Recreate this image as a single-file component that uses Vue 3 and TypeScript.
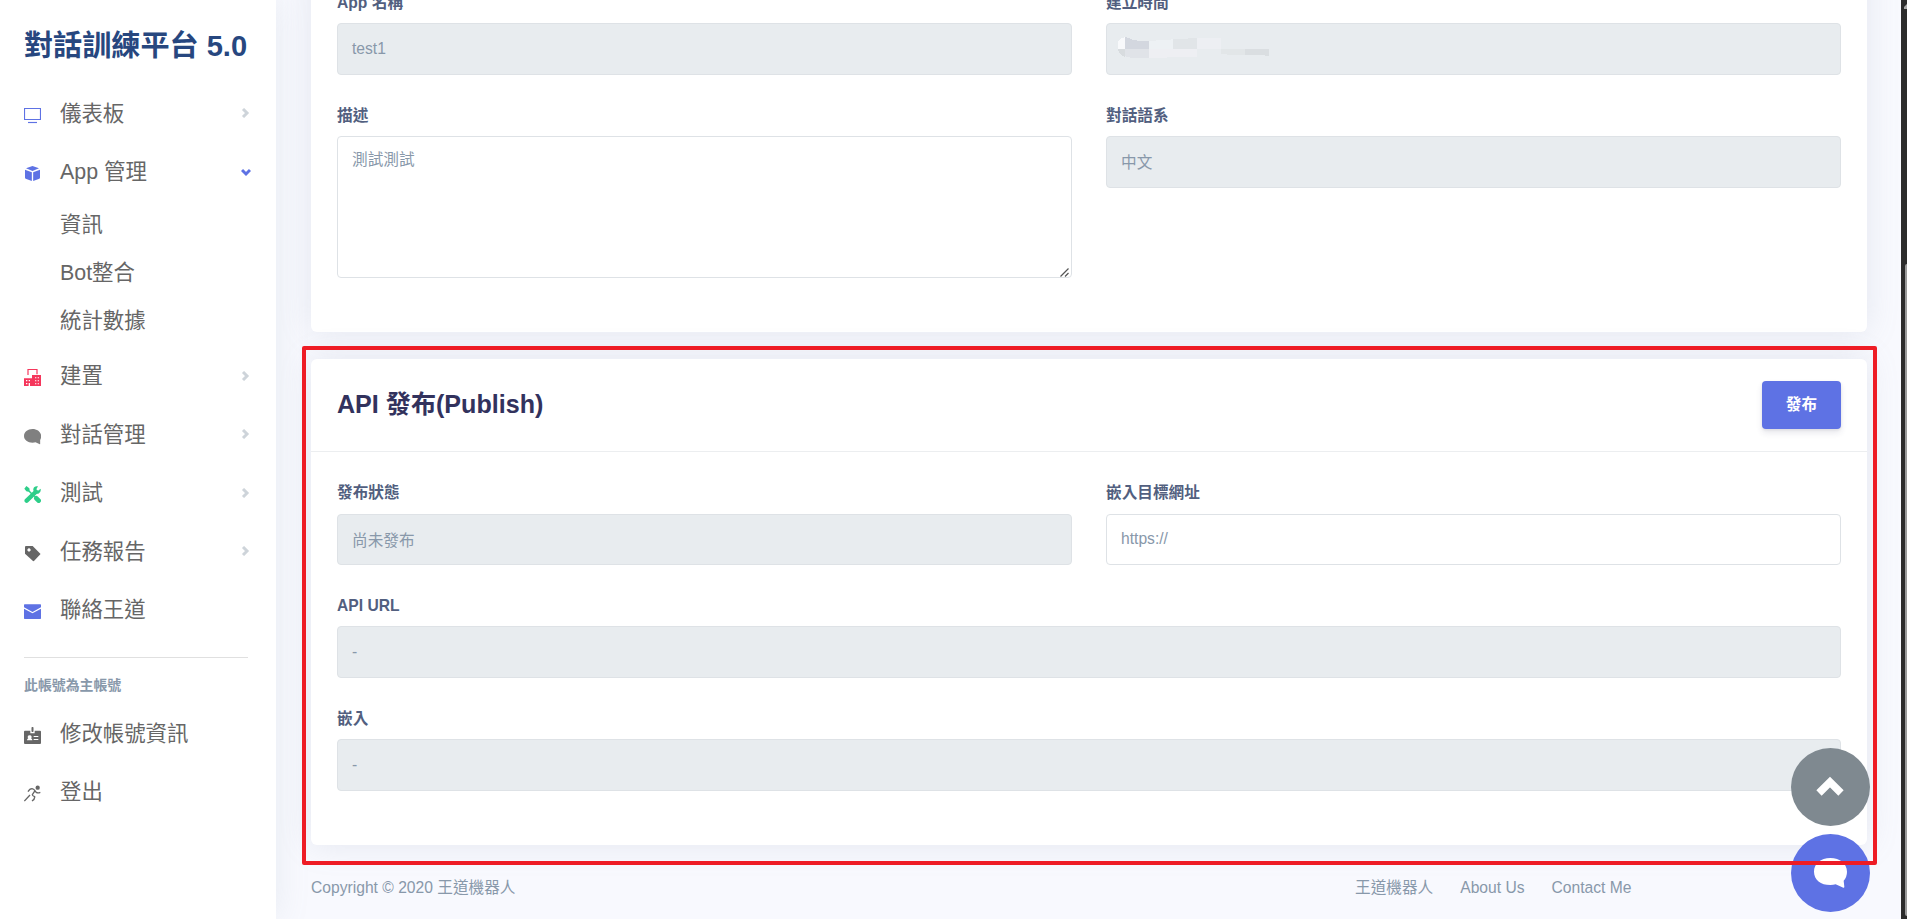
<script setup lang="ts">
import { h, type FunctionalComponent } from 'vue'

interface NavItem {
  label: string
  icon: string
  color: string
  state?: 'closed' | 'open'
  children?: string[]
}

const mainNav: NavItem[] = [
  { label: '儀表板', icon: 'tv', color: '#5e72e4', state: 'closed' },
  { label: 'App 管理', icon: 'box', color: '#5e72e4', state: 'open', children: ['資訊', 'Bot整合', '統計數據'] },
  { label: '建置', icon: 'building', color: '#f5365c', state: 'closed' },
  { label: '對話管理', icon: 'chat', color: '#808080', state: 'closed' },
  { label: '測試', icon: 'tools', color: '#2dce89', state: 'closed' },
  { label: '任務報告', icon: 'tag', color: '#666666', state: 'closed' },
  { label: '聯絡王道', icon: 'mail', color: '#5e72e4' },
]

const accountNav: NavItem[] = [
  { label: '修改帳號資訊', icon: 'badge', color: '#666666' },
  { label: '登出', icon: 'run', color: '#666666' },
]

const shapes: Record<string, string> = {
  tv: '<path d="M1.5 4.5h48v33h-48z" fill="none" stroke="currentColor" stroke-width="3.500"/><path d="M12 46.500h27" stroke="currentColor" stroke-width="3.500"/>',
  box: '<path fill="currentColor" d="M25.500 3 45 10 25.500 18 6 10zM3 14l20.500 8v26L5 41q-2-1-2-3zM48 14l-20.500 8v26L46 41q2-1 2-3z"/>',
  building: '<path d="M12 18V1.500h27V16" fill="none" stroke="currentColor" stroke-width="3.500"/><path fill="currentColor" fill-rule="evenodd" d="M0 28h24V18h27v33H0zm6 5v4h4v-4zm8 0v4h4v-4zm-8 9v4h4v-4zm8 0v9h4v-9zM33 25v3h4v-3zm8 0v3h4v-3zm-8 9v3h4v-3zm8 0v3h4v-3zm-8 9v3h4v-3zm8 0v3h4v-3z"/>',
  chat: '<path fill="currentColor" d="M25.500 3C11 3 0 12 0 24s11 20 25.500 20q5 0 9-1l13 6q1 0 1-1V36q3-5 3-12C51 12 40 3 25.500 3z"/>',
  tools: '<path d="M8 44 35 18" stroke="currentColor" stroke-width="13" stroke-linecap="round"/><path d="M50 8l-8 6-5-4 5-9Q30-1 28 9q-1 6 4 11t11 3q9-3 7-15z" fill="currentColor"/><path d="M8 8l16 16" stroke="currentColor" stroke-width="4.500"/><path d="M7 0l9 7 1 6-4 4-6-1-6-8z" fill="currentColor"/><path d="M33 34l10 10" stroke="#fff" stroke-width="18" stroke-linecap="butt"/><path d="M37 37l7 7" stroke="currentColor" stroke-width="14" stroke-linecap="round"/><path d="M31 30l6 6" stroke="currentColor" stroke-width="4"/>',
  tag: '<path fill="currentColor" fill-rule="evenodd" d="M3 6q0-3 3-3h20l23 23q1 1 0 2L30 48q-2 1-3 0L3 26zM15 10a5 5 0 1 0 .1 0z"/>',
  mail: '<path fill="currentColor" d="M2 4h47q2 0 2 2v7L25.500 27 0 13V6q0-2 2-2zM0 17l25.500 14L51 17v29q0 2-2 2H2q-2 0-2-2z"/>',
  badge: '<path fill="currentColor" fill-rule="evenodd" d="M3 11h16v8h13v-8h16q3 0 3 3v34q0 3-3 3H3q-3 0-3-3V14q0-3 3-3zM9 40h16q0-5-4-6 2-2 2-5-1-4-6-4t-6 4q0 3 2 5-4 1-4 6zM29 27v3h14v-3zm0 9v3h14v-3z"/><rect x="22.500" y="0" width="6" height="15" rx="2" fill="currentColor"/>',
  run: '<circle cx="41" cy="8" r="6.500" fill="currentColor"/><path d="M12 20q5-9 12-9 5 1 9 6l-8 12q0 3 7 6 1 7-8 13M33 17q4 10 16 5M18 30 1 48" fill="none" stroke="currentColor" stroke-width="4"/>',
}

const NavIcon: FunctionalComponent<{ name: string }> = (props) =>
  h('svg', { viewBox: '0 0 51 51', width: 17, height: 17, innerHTML: shapes[props.name] })
NavIcon.props = ['name']

const footerLinks: string[] = ['王道機器人', 'About Us', 'Contact Me']
</script>

<template>
  <div class="page">
    <aside class="sidebar">
      <h1 class="brand">對話訓練平台 5.0</h1>
      <nav class="nav">
        <template v-for="item in mainNav" :key="item.label">
          <a class="nav-item">
            <NavIcon class="nav-icon" :name="item.icon" :style="{ color: item.color }" />
            <span class="nav-label">{{ item.label }}</span>
            <svg v-if="item.state" class="chevron" :class="item.state" viewBox="0 0 10 10" width="10" height="10">
              <path d="M3 1l4 4-4 4" fill="none" stroke="currentColor" stroke-width="3" />
            </svg>
          </a>
          <div v-if="item.children" class="sub-nav">
            <a v-for="child in item.children" :key="child" class="sub-item">{{ child }}</a>
          </div>
        </template>
      </nav>
      <hr class="divider" />
      <h6 class="nav-heading">此帳號為主帳號</h6>
      <nav class="account-nav">
        <a v-for="item in accountNav" :key="item.label" class="nav-item">
          <NavIcon class="nav-icon" :name="item.icon" :style="{ color: item.color }" />
          <span class="nav-label">{{ item.label }}</span>
        </a>
      </nav>
    </aside>

    <main class="content">
      <section class="card info-card">
        <div class="row">
          <div class="group">
            <label class="label">App 名稱</label>
            <div class="control disabled">test1</div>
          </div>
          <div class="group">
            <label class="label">建立時間</label>
            <div class="control disabled redacted">
              <svg width="152" height="21" viewBox="0 0 456 63" shape-rendering="crispEdges">
                <path d="M2 36V20Q6 2 24 1v35z" fill="#f8f9fb" />
                <path d="M24 1q14-1 25 9l47 2v24H24z" fill="#d3d7df" />
                <path d="M2 36h22v24Q6 54 2 36z" fill="#d8dcdf" />
                <path d="M24 36h72v27H60q-22 0-36-5z" fill="#e0e3e8" />
                <path d="M96 12l72-5v29H96z" fill="#edf1f4" />
                <path d="M96 36h144v23l-144 4z" fill="#eeeff3" />
                <path d="M168 7l72-4v33h-72z" fill="#e1e5e8" />
                <path d="M240 2h72v34h-72z" fill="#edeff3" />
                <path d="M312 36h72v18l-72-2z" fill="#e2e6e8" />
                <path d="M384 36h72v20l-72-3z" fill="#dadee1" />
              </svg>
            </div>
          </div>
        </div>
        <div class="row">
          <div class="group">
            <label class="label">描述</label>
            <div class="control textarea">
              測試測試
              <svg class="grip" width="9" height="9" viewBox="0 0 9 9">
                <path d="M0.500 8.500 8.500 0.500M5 8.500l3.500-3.500" stroke="#555" stroke-width="1.200" />
              </svg>
            </div>
          </div>
          <div class="group">
            <label class="label">對話語系</label>
            <div class="control disabled cjk">中文</div>
          </div>
        </div>
      </section>

      <section class="card">
        <header class="card-header">
          <h3 class="card-title">API 發布(Publish)</h3>
          <button class="publish" type="button">發布</button>
        </header>
        <div class="card-body">
          <div class="row">
            <div class="group">
              <label class="label">發布狀態</label>
              <div class="control disabled short cjk">尚未發布</div>
            </div>
            <div class="group">
              <label class="label">嵌入目標網址</label>
              <div class="control short latin">https://</div>
            </div>
          </div>
          <div class="row">
            <div class="group">
              <label class="label">API URL</label>
              <div class="control disabled">-</div>
            </div>
          </div>
          <div class="row">
            <div class="group">
              <label class="label">嵌入</label>
              <div class="control disabled">-</div>
            </div>
          </div>
        </div>
      </section>

      <footer class="footer">
        <span class="copyright">Copyright © 2020 王道機器人</span>
        <nav class="footer-nav">
          <a v-for="link in footerLinks" :key="link">{{ link }}</a>
        </nav>
      </footer>
    </main>

    <div class="floating">
      <button class="round top" type="button">
        <svg width="28" height="20" viewBox="0 0 28 20">
          <path d="M3 17 14 6l11 11" fill="none" stroke="#fff" stroke-width="7.500" />
        </svg>
      </button>
      <button class="round talk" type="button">
        <svg width="33" height="30" viewBox="0 0 99 90">
          <path d="M49 0C20 0 0 17 0 41s20 40 49 40q9 0 16-2l23 10q3 1 3-3l-2-18q10-11 10-27C99 17 78 0 49 0z" fill="#fff" />
        </svg>
      </button>
    </div>

    <div class="highlight"></div>

    <div class="scrollbar">
      <svg class="scroll-arrow" width="3" height="5" viewBox="0 0 3 5"><path d="M0 5V3l3-3v5z" fill="#aaa" /></svg>
      <div class="thumb"></div>
    </div>
  </div>
</template>

<style>
body {
  margin: 0;
  overflow: hidden;
}
</style>

<style scoped>
.page {
  position: relative;
  display: flex;
  width: 1907px;
  height: 919px;
  overflow: hidden;
  box-sizing: border-box;
  background: #f8f9fe;
  color: #8898aa;
  font-family: 'Liberation Sans', 'Noto Sans CJK TC', sans-serif;
  font-size: 15.65px;
}

.page * {
  box-sizing: border-box;
}

.sidebar {
  position: relative;
  z-index: 1;
  flex: none;
  width: 276px;
  height: 919px;
  padding: 0 27px 0 24px;
  background: #fff;
  box-shadow: 0 0 32px 0 rgba(136, 152, 170, 0.15);
}

.brand {
  height: 84px;
  margin: 0;
  padding-top: 1px;
  color: #27477f;
  font-size: 29.1px;
  font-weight: 700;
  line-height: 91px;
  white-space: nowrap;
}

.nav {
  padding-top: 0.4px;
}

.nav-item {
  display: flex;
  align-items: center;
  height: 58.6px;
  color: #666;
  font-size: 21.4px;
}

.nav-icon {
  flex: none;
  margin: 3px 19px 0 0;
}

.nav-label {
  flex: 1;
  line-height: 32px;
  white-space: nowrap;
}

.chevron {
  flex: none;
  margin: -1px -1px 0 0;
  color: #ced4da;
}

.chevron.open {
  margin-right: -2px;
  color: #5e72e4;
  transform: rotate(90deg);
}

.sub-item {
  display: block;
  height: 48.4px;
  padding-left: 36px;
  color: #666;
  font-size: 21.4px;
  line-height: 47px;
}

.divider {
  height: 1px;
  margin: 17px 1px 0 0;
  border: 0;
  background: #e0e0e0;
}

.nav-heading {
  height: 48px;
  margin: 0;
  color: #8898aa;
  font-size: 13.9px;
  font-weight: 700;
  line-height: 54px;
}

.account-nav .nav-item {
  height: 57.3px;
}

.content {
  flex: none;
  width: 1625px;
  padding: 0 34px 0 35px;
}

.card {
  border-radius: 6px;
  background: #fff;
  box-shadow: 0 0 32px 0 rgba(136, 152, 170, 0.18);
}

.info-card {
  height: 380px;
  margin-top: -48px;
  margin-bottom: 27px;
  padding: 38px 26px 0;
}

.row {
  display: flex;
  gap: 34px;
  margin-bottom: 28px;
}

.group {
  flex: 1;
}

.label {
  display: block;
  height: 24px;
  margin-bottom: 9px;
  color: #525f7f;
  font-weight: 600;
  line-height: 26px;
}

.card-body .row:first-child .label {
  line-height: 23px;
}

.control {
  position: relative;
  height: 52px;
  padding: 0 14px;
  border: 1px solid #dee2e6;
  border-radius: 4px;
  background: #fff;
  line-height: 50px;
}

.control.cjk {
  line-height: 52px;
}

.control.short {
  height: 51px;
}

.control.latin {
  line-height: 47px;
}

.control.disabled {
  background: #e8ecef;
}

.control.textarea {
  height: 142px;
  padding-top: 10px;
  line-height: 25px;
}

.control.redacted {
  padding: 13px 0 0 10px;
  line-height: 0;
}

.grip {
  position: absolute;
  right: 2px;
  bottom: 0;
}

.card-header {
  display: flex;
  align-items: center;
  justify-content: space-between;
  height: 93px;
  padding: 0 26px;
  border-bottom: 1px solid #eceef0;
}

.card-title {
  margin: 0;
  padding-bottom: 6px;
  color: #32325d;
  font-size: 25.1px;
  font-weight: 600;
}

.publish {
  width: 79px;
  height: 48px;
  padding: 0 0 4px;
  border: 0;
  border-radius: 4px;
  background: #5e72e4;
  box-shadow: 0 4px 6px rgba(50, 50, 93, 0.11), 0 1px 3px rgba(0, 0, 0, 0.08);
  color: #fff;
  font-family: inherit;
  font-size: 15.65px;
  font-weight: 600;
}

.card-body {
  height: 393px;
  padding: 29px 26px 0;
}

.footer {
  display: flex;
  height: 74px;
  line-height: 86px;
}

.copyright {
  width: 1044px;
}

.footer-nav {
  display: flex;
  gap: 27px;
}

.floating {
  position: absolute;
  z-index: 2;
  left: 1791px;
  top: 748px;
  display: flex;
  flex-direction: column;
  gap: 8px;
}

.round {
  display: flex;
  align-items: center;
  justify-content: center;
  width: 79px;
  height: 78px;
  padding: 0 1px 2px 0;
  border: 0;
  border-radius: 50%;
}

.top {
  background: #7f8990;
}

.talk {
  padding-bottom: 0;
  background: #5e72e4;
}

.highlight {
  position: absolute;
  z-index: 3;
  left: 302px;
  top: 346px;
  width: 1575px;
  height: 519px;
  border: 4px solid #ee1c25;
  border-radius: 2px;
}

.scrollbar {
  position: relative;
  flex: none;
  width: 6px;
  height: 919px;
  padding: 4px 0 0 3px;
  background: #2c2c2c;
}

.scroll-arrow {
  display: block;
}

.thumb {
  width: 2px;
  height: 652px;
  margin: 255px 0 0 1px;
  border-radius: 2px 0 0 2px;
  background: #9b9b9b;
}
</style>
